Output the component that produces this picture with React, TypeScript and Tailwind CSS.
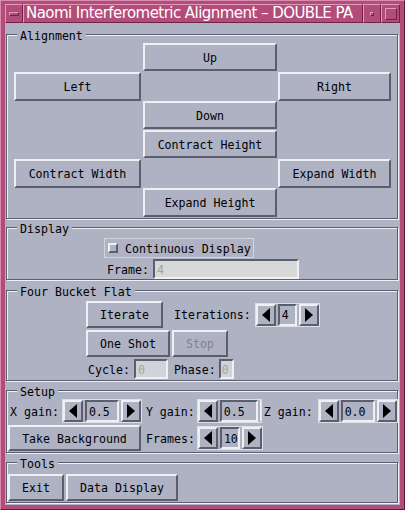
import type { ReactNode } from 'react'

const raised =
  'border-2 border-t-[#eef0f4] border-l-[#eef0f4] border-r-[#5b5e6c] border-b-[#5b5e6c] bg-[#aeb2c3]'
const sunken =
  'border-2 border-t-[#5b5e6c] border-l-[#5b5e6c] border-r-[#eef0f4] border-b-[#eef0f4]'
const pinkRaised =
  'border border-t-[#e39bbd] border-l-[#e39bbd] border-r-[#6f2148] border-b-[#6f2148]'

function Btn({ children, className = '', dim = false }: { children: ReactNode; className?: string; dim?: boolean }) {
  return (
    <div className={`flex items-center justify-center pt-[3px] ${raised} ${dim ? 'text-[#80838f]' : 'text-black'} ${className}`}>
      {children}
    </div>
  )
}

function Label({ children, className = '' }: { children: ReactNode; className?: string }) {
  return <span className={`shrink-0 pt-[3px] ${className}`}>{children}</span>
}

function Arrow({ left }: { left?: boolean }) {
  return (
    <div className={`flex w-[20px] shrink-0 items-center justify-center ${raised}`}>
      {left ? (
        <div className="h-0 w-0 border-y-[7px] border-r-[8px] border-y-transparent border-r-black" />
      ) : (
        <div className="h-0 w-0 border-y-[7px] border-l-[8px] border-y-transparent border-l-black" />
      )}
    </div>
  )
}

function Spin({ value, fieldW, className = '' }: { value: string; fieldW: string; className?: string }) {
  return (
    <div className={`flex h-[24px] shrink-0 gap-[2px] overflow-hidden border border-[#dfe1e8] ${className}`}>
      <Arrow left />
      <div className={`flex shrink-0 items-center pl-[2px] pt-[3px] bg-[#aeb2c3] ${sunken} ${fieldW}`}>{value}</div>
      <Arrow />
    </div>
  )
}

function Frame({ label, className = '', children }: { label: string; className?: string; children: ReactNode }) {
  return (
    <div
      className={`relative ml-[1px] w-[392px] border border-[#5b5e6c] shadow-[inset_1px_1px_0_#eef0f4,1px_1px_0_#eef0f4] ${className}`}
    >
      <span className="absolute left-[10px] top-[-7px] bg-[#aeb2c3] px-[3px] pt-[2px] leading-[13px]">{label}</span>
      {children}
    </div>
  )
}

export default function App() {
  return (
    <div className="flex h-[510px] w-[405px] flex-col border border-t-[#d98bb0] border-l-[#d98bb0] border-r-[#5e1a3c] border-b-[#5e1a3c] bg-[#b24c78] px-[4px] pb-[4px] pt-[3px]">
      {/* Title bar */}
      <div className="flex h-[19px] shrink-0">
        <div className={`flex w-[18px] items-center justify-center ${pinkRaised}`}>
          <div className={`h-[4px] w-[10px] ${pinkRaised}`} />
        </div>
        <div
          className={`flex-1 overflow-hidden whitespace-nowrap pl-[2px] text-[15px] leading-[17px] tracking-[-0.55px] text-white font-['DejaVu_Sans',sans-serif] ${pinkRaised}`}
        >
          Naomi Interferometric Alignment – DOUBLE PA
        </div>
        <div className={`flex w-[18px] items-center justify-center ${pinkRaised}`}>
          <div className={`h-[4px] w-[4px] ${pinkRaised}`} />
        </div>
        <div className={`flex w-[19px] items-center justify-center ${pinkRaised}`}>
          <div className={`h-[12px] w-[12px] ${pinkRaised}`} />
        </div>
      </div>

      {/* Content */}
      <div className="flex h-[482px] flex-col whitespace-nowrap bg-[#aeb2c3] text-[11.6px] leading-none text-black font-['DejaVu_Sans_Mono',monospace]">
        <Frame label="Alignment" className="mt-[11px] pb-[1px] pl-[7px] pt-[8px]">
          <div className="grid grid-cols-[129px_135px_113px] grid-rows-[repeat(6,29px)]">
            <div />
            <Btn className="h-[28px] w-[134px]">Up</Btn>
            <div />
            <Btn className="h-[29px] w-[127px]">Left</Btn>
            <div />
            <Btn className="h-[29px] w-[113px]">Right</Btn>
            <div />
            <Btn className="h-[28px] w-[134px]">Down</Btn>
            <div />
            <div />
            <Btn className="h-[28px] w-[134px]">Contract Height</Btn>
            <div />
            <Btn className="h-[29px] w-[127px]">Contract Width</Btn>
            <div />
            <Btn className="h-[29px] w-[113px]">Expand Width</Btn>
            <div />
            <Btn className="h-[29px] w-[134px]">Expand Height</Btn>
            <div />
          </div>
        </Frame>

        <Frame label="Display" className="mt-[8px] pt-[10px]">
          <div className="ml-[97px] flex h-[20px] w-[150px] items-center border border-[#d3d5dd] pl-[3px]">
            <div className="h-[10px] w-[10px] border-2 border-t-[#eef0f4] border-l-[#eef0f4] border-r-[#5b5e6c] border-b-[#5b5e6c]" />
            <Label className="ml-[7px]">Continuous Display</Label>
          </div>
          <div className="ml-[100px] mt-[1px] flex h-[20px] items-center">
            <Label>Frame:</Label>
            <div className={`ml-[4px] flex h-[20px] w-[146px] items-center bg-[#d8d8d8] pl-[2px] pt-[3px] text-[#a3a3a3] ${sunken}`}>4</div>
          </div>
        </Frame>

        <Frame label="Four Bucket Flat" className="mt-[10px] pb-[1px] pt-[10px]">
          <div className="ml-[79px] flex h-[27px] items-center">
            <Btn className="h-[27px] w-[77px]">Iterate</Btn>
            <Label className="ml-[11px]">Iterations:</Label>
            <Spin value="4" fieldW="w-[19px]" className="ml-[4px]" />
          </div>
          <div className="ml-[79px] mt-[2px] flex h-[27px] gap-[2px]">
            <Btn className="h-[27px] w-[84px]">One Shot</Btn>
            <Btn className="h-[27px] w-[56px]" dim>
              Stop
            </Btn>
          </div>
          <div className="ml-[81px] mt-[2px] flex h-[20px] items-center">
            <Label>Cycle:</Label>
            <div className={`ml-[4px] flex h-[20px] w-[34px] items-center bg-[#d2d3d8] pl-[2px] pt-[3px] text-[#a3a3a3] ${sunken}`}>0</div>
            <Label className="ml-[6px]">Phase:</Label>
            <div className={`ml-[3px] flex h-[20px] w-[15px] items-center bg-[#d2d3d8] pl-[1px] pt-[3px] text-[#a3a3a3] ${sunken}`}>0</div>
          </div>
        </Frame>

        <Frame label="Setup" className="mt-[9px] pb-[1px] pt-[8px]">
          <div className="ml-[3px] flex h-[24px] items-center">
            <Label>X gain:</Label>
            <Spin value="0.5" fieldW="w-[34px]" className="ml-[3px]" />
            <Label className="ml-[4px]">Y gain:</Label>
            <div className="ml-[2px] w-[65px] shrink-0 overflow-hidden">
              <Spin value="0.5" fieldW="w-[38px]" />
            </div>
            <Label className="ml-[2px]">Z gain:</Label>
            <Spin value="0.0" fieldW="w-[34px]" className="ml-[5px]" />
          </div>
          <div className="ml-[1px] mt-[2px] flex h-[26px] items-center">
            <Btn className="h-[26px] w-[133px]">Take Background</Btn>
            <Label className="ml-[5px]">Frames:</Label>
            <Spin value="10" fieldW="w-[20px]" className="ml-[2px]" />
          </div>
        </Frame>

        <Frame label="Tools" className="mt-[9px] pb-[1px] pl-[1px] pt-[11px]">
          <div className="flex h-[27px] gap-[2px]">
            <Btn className="h-[27px] w-[56px]">Exit</Btn>
            <Btn className="h-[27px] w-[112px]">Data Display</Btn>
          </div>
        </Frame>
      </div>
    </div>
  )
}
